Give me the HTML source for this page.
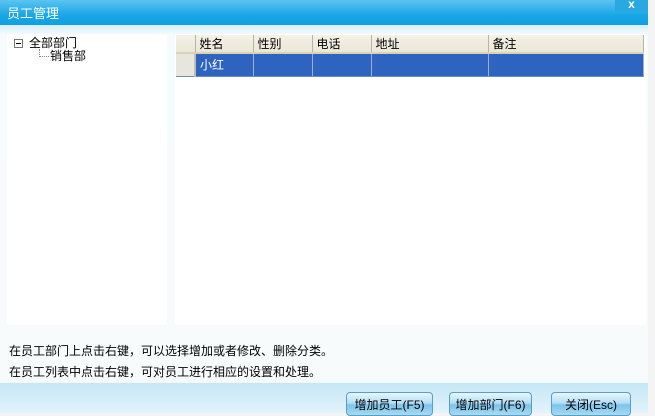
<!DOCTYPE html>
<html><head><meta charset="utf-8"><style>
*{margin:0;padding:0;box-sizing:border-box}
body{width:655px;height:413px;overflow:hidden;position:relative;background:#f4f4f4;font-family:"Liberation Sans","Noto Sans CJK SC","WenQuanYi Zen Hei",sans-serif;font-size:12px;color:#000}
.title{position:absolute;left:0;top:0;width:648px;height:25px;background:linear-gradient(#5cc4f0,#1aa6e6 60%,#10a0e2);color:#fff;font-size:13px;padding:3px 0 0 7px}
.close{position:absolute;left:615px;top:0;width:33px;height:12px;background:#2aa8e2;color:#fff;font-weight:bold;text-align:center;font-size:12px;line-height:8px}
.body{position:absolute;left:0;top:25px;width:648px;height:388px;background:linear-gradient(#d6eef9,#f6fbfd 10px,#f8fbfc 90%,#e8f5fb)}
.bottom{position:absolute;left:0;top:383px;width:648px;height:30px;background:linear-gradient(#c6e6f6,#e2f3fb)}
.left{position:absolute;left:7px;top:34px;width:160px;height:291px;background:#fff}
.right{position:absolute;left:175px;top:34px;width:471px;height:291px;background:#fff}
.grid{position:absolute;left:176px;top:35px;height:41px;border-collapse:collapse;table-layout:fixed}
.grid td{padding:0 0 0 4px;border-right:1px solid #b8b4a4;white-space:nowrap;overflow:hidden}
.hd td{height:17px;background:linear-gradient(#f4f1e6,#ece7d6);border-bottom:2px solid #d8d2bc}
.rw td{height:23px;background:#2f63c0;color:#fff;border-right:1px solid #9eaed0;border-bottom:1px solid #708ab8}
.rw td.ind{background:#e8e6dc;border-right:2px solid #c0bcae}
.tree1{position:absolute;left:14px;top:34px}
.box{display:inline-block;width:9px;height:9px;border:1px solid #777;position:relative;top:1px;margin-right:6px;background:#fff}
.box:after{content:"";position:absolute;left:1px;top:3px;width:5px;height:1px;background:#000}
.tree2{position:absolute;left:50px;top:47px}
.dots{position:absolute;left:39px;top:49px;width:10px;height:8px;border-left:1px dotted #888;border-bottom:1px dotted #888}
.t1{position:absolute;left:9px;top:342px;font-size:12px}
.t2{position:absolute;left:9px;top:363px;font-size:12px}
.btn{position:absolute;top:392px;height:24px;border:1px solid #5b9ec4;border-radius:4px;background:linear-gradient(#e8f6fd,#b4dff5 45%,#7cc4ea 55%,#a8daf4);text-align:center;font-size:12px;padding-top:3px}
</style></head><body>
<div class="body"></div>
<div class="bottom"></div>
<div class="title">员工管理</div>
<div class="close">x</div>
<div class="left"></div>
<div class="right"></div>
<div class="tree1"><span class="box"></span>全部部门</div>
<div class="dots"></div>
<div class="tree2">销售部</div>
<table class="grid">
<colgroup><col style="width:19px"><col style="width:58px"><col style="width:59px"><col style="width:59px"><col style="width:117px"><col style="width:155px"></colgroup>
<tr class="hd"><td></td><td>姓名</td><td>性别</td><td>电话</td><td>地址</td><td>备注</td></tr>
<tr class="rw"><td class="ind"></td><td>小红</td><td></td><td></td><td></td><td></td></tr>
</table>
<div class="t1">在员工部门上点击右键，可以选择增加或者修改、删除分类。</div>
<div class="t2">在员工列表中点击右键，可对员工进行相应的设置和处理。</div>
<div class="btn" style="left:346px;width:87px">增加员工(F5)</div>
<div class="btn" style="left:449px;width:83px">增加部门(F6)</div>
<div class="btn" style="left:551px;width:80px">关闭(Esc)</div>
</body></html>
